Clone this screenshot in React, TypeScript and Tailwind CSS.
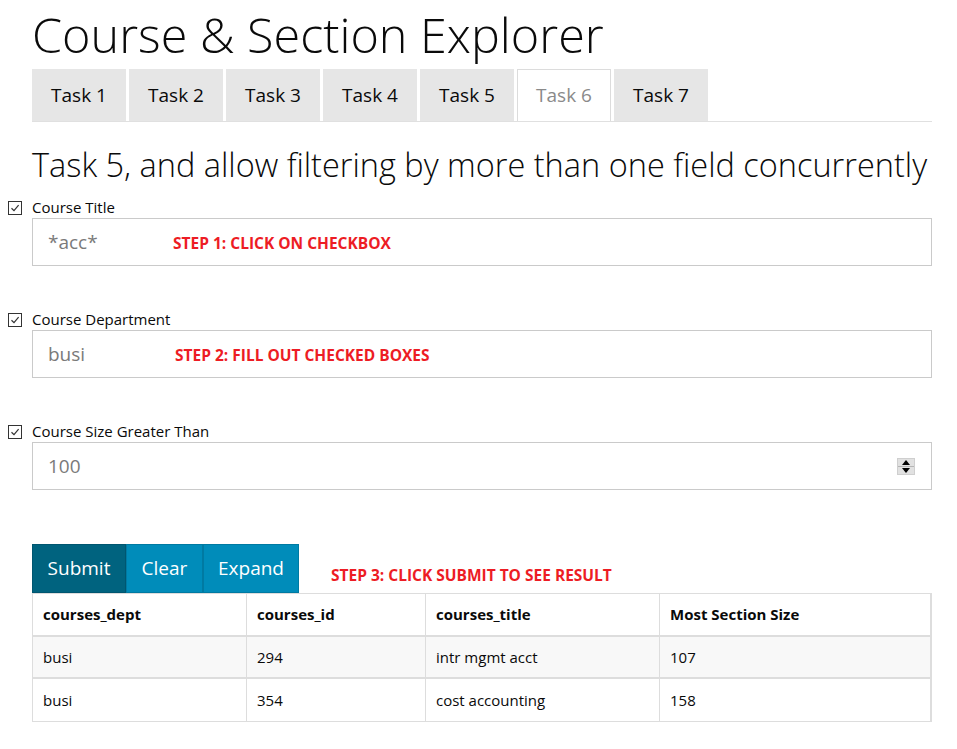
import React from "react";

const CheckBox = () => (
  <div className="w-[14px] h-[14px] border border-[#333] bg-white flex items-center justify-center">
    <svg width="10" height="10" viewBox="0 0 10 10">
      <path d="M1.5 5.2 L4 7.6 L8.6 2.2" fill="none" stroke="#333" strokeWidth="1.2" />
    </svg>
  </div>
);

const Field = ({ label, value, note, noteClass, spinner }: { label: string; value: string; note?: string; noteClass?: string; spinner?: boolean }) => (
  <div className="flex flex-col">
    <div className="flex items-center h-[21px]">
      <div className="w-[32px] pl-[8px] flex items-center">
        <CheckBox />
      </div>
      <span className="text-[15px] text-[#0a0a0a] leading-[21px]">{label}</span>
    </div>
    <div className="ml-[32px] w-[900px] h-[48px] border border-[#cacaca] bg-white flex items-center pl-[15px] pr-[16px]">
      <span className="text-[19px] text-[#7a7a7a] w-[125px]">{value}</span>
      {note && <span className={`text-[15.5px] font-bold text-[#ed1c24] mt-[4px] ${noteClass ?? ""}`}>{note}</span>}
      {spinner && (
        <div className="ml-auto w-[18px] h-[17px] bg-[#e1e1e1] border border-[#cfcfcf] flex flex-col">
          <div className="flex-1 flex items-center justify-center border-b border-[#b5b5b5]">
            <svg width="8" height="5" viewBox="0 0 8 5"><path d="M0 5 L4 0 L8 5 Z" fill="#000" /></svg>
          </div>
          <div className="flex-1 flex items-center justify-center">
            <svg width="8" height="5" viewBox="0 0 8 5"><path d="M0 0 L4 5 L8 0 Z" fill="#000" /></svg>
          </div>
        </div>
      )}
    </div>
  </div>
);

export default function App() {
  const tabs = ["Task 1", "Task 2", "Task 3", "Task 4", "Task 5", "Task 6", "Task 7"];
  const rows = [
    ["busi", "294", "intr mgmt acct", "107"],
    ["busi", "354", "cost accounting", "158"],
  ];
  const widths = ["w-[214px]", "w-[179px]", "w-[234px]", "flex-1"];
  return (
    <div className="font-['Open_Sans',sans-serif] text-[#0a0a0a] bg-white min-h-[749px] w-[957px]">
      <div className="ml-[32px] w-[900px]">
        <h1 className="text-[48.5px] font-light leading-[68px] text-[#0a0a0a]">Course &amp; Section Explorer</h1>
        <div className="flex gap-[3px] border-b border-[#e0e0e0] mt-[1px]">
          {tabs.map((t) => (
            <div
              key={t}
              className={
                t === "Task 6"
                  ? "w-[94px] h-[52px] flex items-center justify-center text-[19px] bg-white border border-b-0 border-[#dcdcdc] text-[#8a8a8a]"
                  : "w-[94px] h-[52px] flex items-center justify-center text-[19px] bg-[#e6e6e6] text-[#0a0a0a]"
              }
            >
              {t}
            </div>
          ))}
        </div>
        <h2 className="text-[32.5px] font-light leading-[44px] mt-[21px] mb-[10px] whitespace-nowrap">
          Task 5, and allow filtering by more than one field concurrently
        </h2>
      </div>
      <div className="flex flex-col gap-[43px]">
        <Field label="Course Title" value="*acc*" note="STEP 1: CLICK ON CHECKBOX" />
        <Field label="Course Department" value="busi" note="STEP 2: FILL OUT CHECKED BOXES" noteClass="ml-[2px]" />
        <Field label="Course Size Greater Than" value="100" spinner />
      </div>
      <div className="ml-[32px] w-[900px] mt-[54px]">
        <div className="flex items-end">
          <div className="h-[49px] w-[94px] bg-[#00637f] border border-[#005670] text-white text-[19px] flex items-center justify-center">Submit</div>
          <div className="h-[49px] w-[77px] bg-[#008cba] border border-[#007aa2] text-white text-[19px] flex items-center justify-center">Clear</div>
          <div className="h-[49px] w-[96px] bg-[#008cba] border border-[#007aa2] text-white text-[19px] flex items-center justify-center">Expand</div>
          <span className="ml-[32px] mb-[6px] text-[15.5px] font-bold text-[#ed1c24]">STEP 3: CLICK SUBMIT TO SEE RESULT</span>
        </div>
        <div className="border border-[#dddddd] border-r-2">
          <div className="flex h-[43px] border-b-2 border-[#dddddd] bg-white">
            {["courses_dept", "courses_id", "courses_title", "Most Section Size"].map((h, i) => (
              <div key={h} className={`${widths[i]} ${i < 3 ? "border-r border-[#dddddd]" : ""} flex items-center pl-[10px] text-[15px] font-bold`}>
                {h}
              </div>
            ))}
          </div>
          {rows.map((r, ri) => (
            <div key={ri} className={`flex h-[42px] ${ri === 0 ? "bg-[#f8f8f8] border-b-2 border-[#dddddd]" : "bg-white"}`}>
              {r.map((c, i) => (
                <div key={i} className={`${widths[i]} ${i < 3 ? "border-r border-[#dddddd]" : ""} flex items-center pl-[10px] text-[15px]`}>
                  {c}
                </div>
              ))}
            </div>
          ))}
        </div>
      </div>
    </div>
  );
}
